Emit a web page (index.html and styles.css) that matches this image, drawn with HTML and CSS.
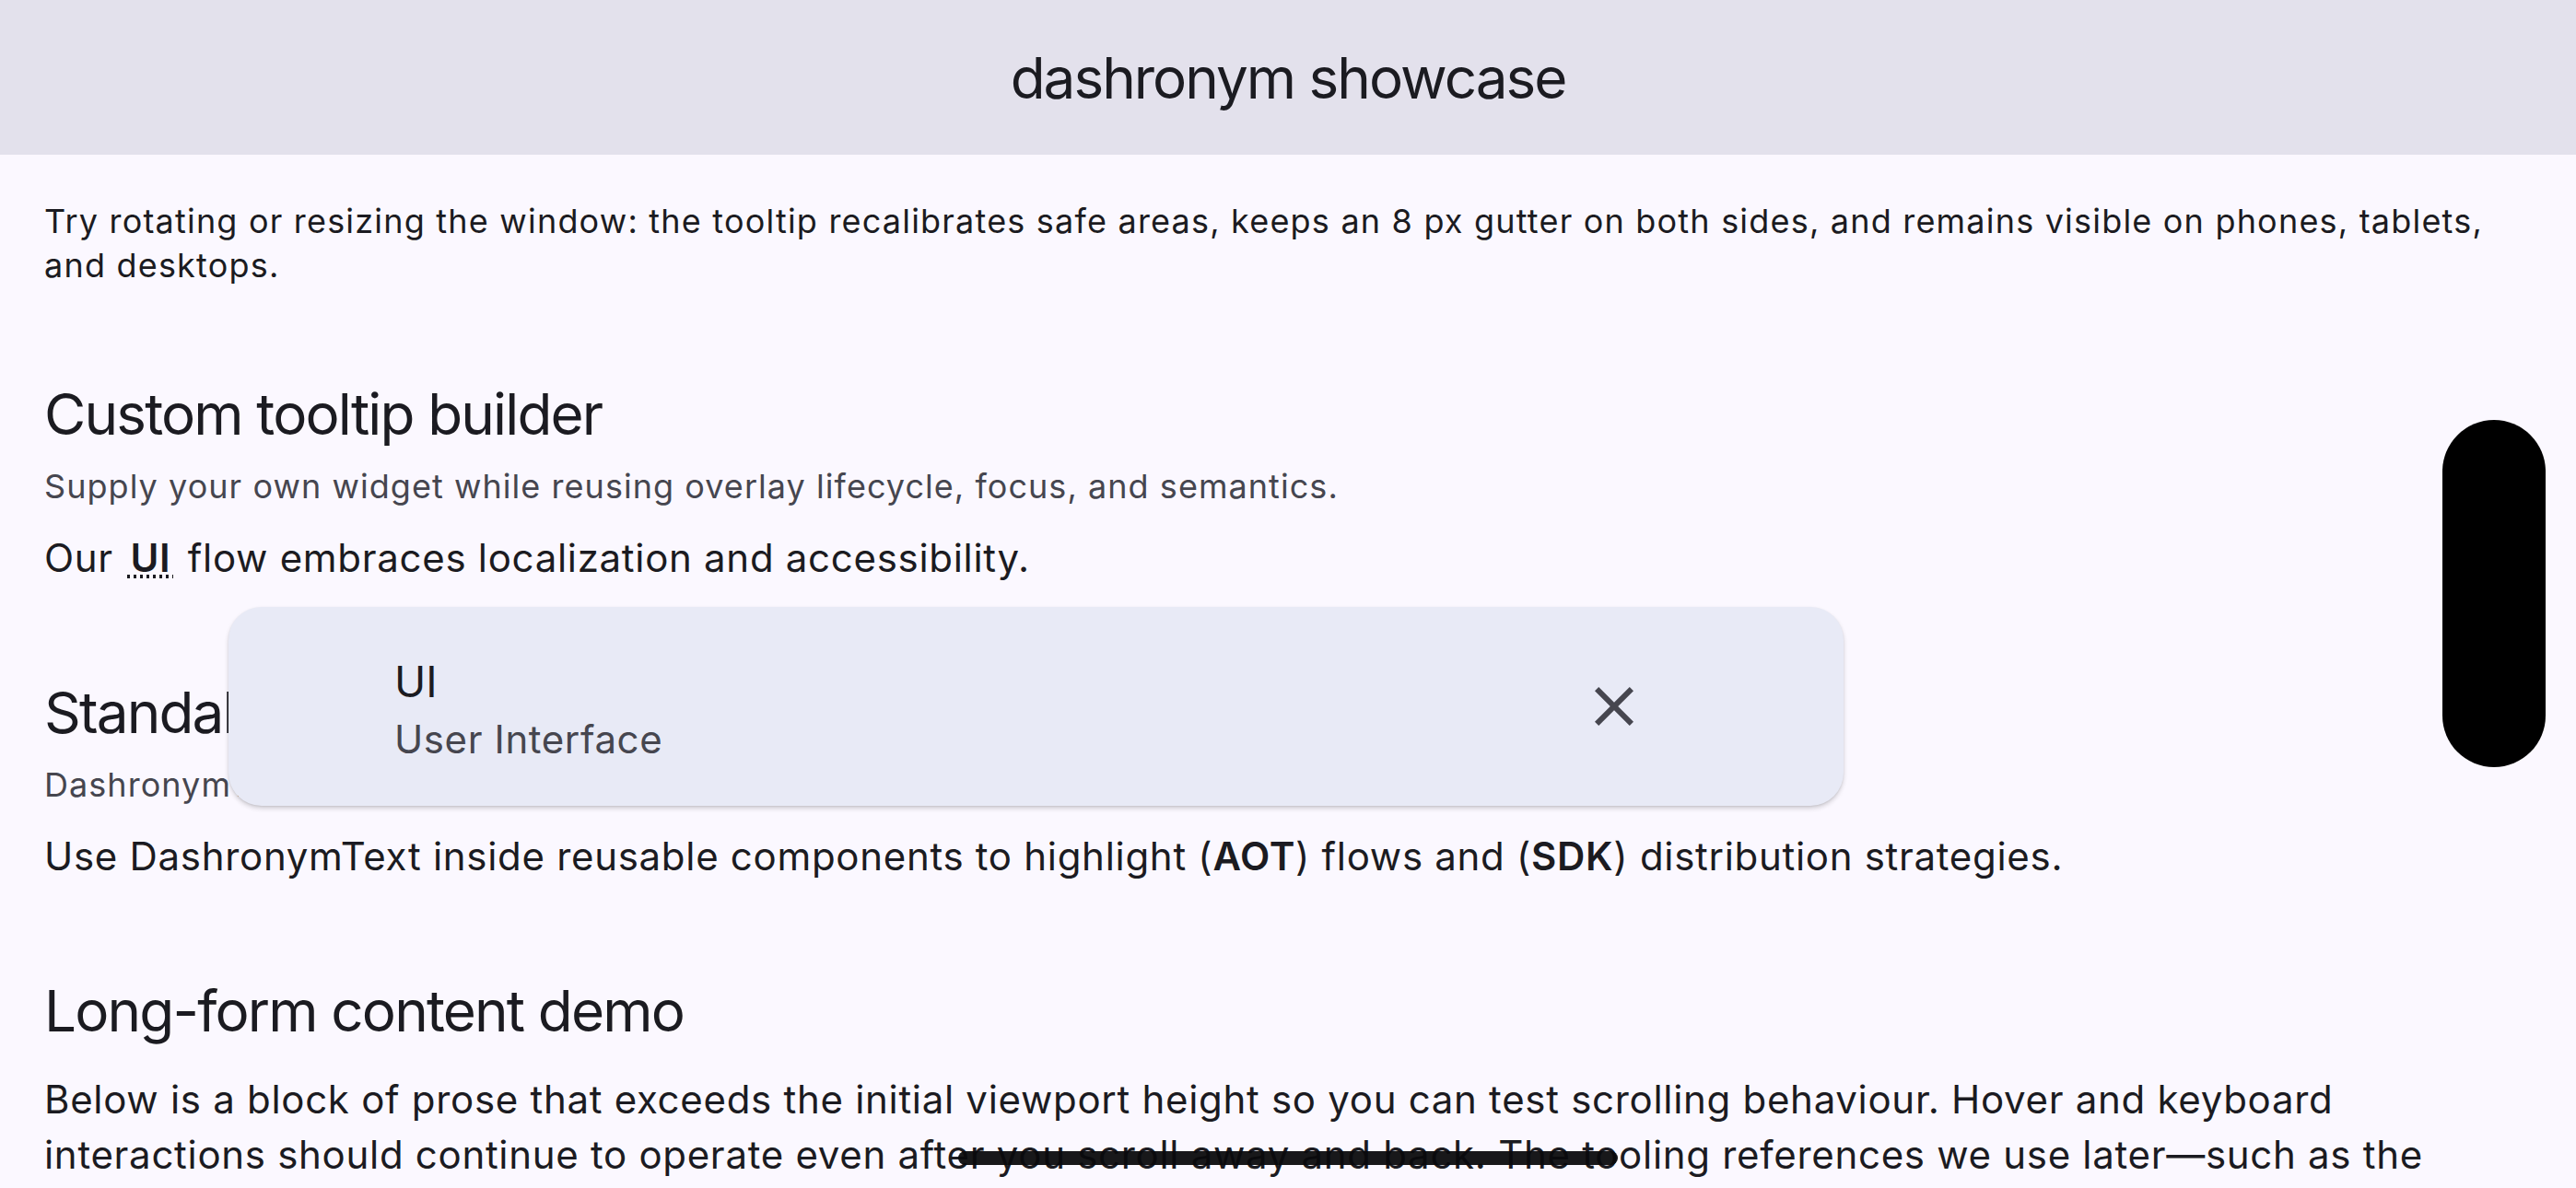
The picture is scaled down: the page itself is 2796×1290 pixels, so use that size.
FILE: index.html
```html
<!DOCTYPE html>
<html lang="en">
<head>
<meta charset="utf-8">
<title>dashronym showcase</title>
<link rel="stylesheet" href="styles.css">
</head>
<body>
<div class="app">
  <header class="appbar">
    <h1 class="appbar-title">dashronym showcase</h1>
  </header>
  <main class="content">
    <p class="intro">Try rotating or resizing the window: the tooltip recalibrates safe areas, keeps an 8 px gutter on both sides, and remains visible on phones, tablets, and desktops.</p>

    <section class="section">
      <h2 class="heading">Custom tooltip builder</h2>
      <p class="sub">Supply your own widget while reusing overlay lifecycle, focus, and semantics.</p>
      <p class="body">Our <span class="acro">UI</span> flow embraces localization and accessibility.</p>
    </section>

    <section class="section">
      <h2 class="heading">Standalone widget</h2>
      <p class="sub">DashronymText drops into any widget tree without extra configuration.</p>
      <p class="body">Use DashronymText inside reusable components to highlight (<b class="strong">AOT</b>) flows and (<b class="strong">SDK</b>) distribution strategies.</p>
    </section>

    <section class="section">
      <h2 class="heading">Long-form content demo</h2>
      <p class="body long">Below is a block of prose that exceeds the initial viewport height so you can test scrolling behaviour. Hover and keyboard interactions should continue to operate even after you scroll away and back. The tooling references we use later—such as the continuous integration pipelines and the command line tools—remain discoverable through the same tooltip surface while the page keeps scrolling underneath.</p>
    </section>
  </main>

  <div class="tooltip" role="tooltip">
    <div class="tooltip-text">
      <div class="tooltip-term">UI</div>
      <div class="tooltip-def">User Interface</div>
    </div>
    <button class="tooltip-close" aria-label="Close">
      <svg viewBox="0 0 24 24" width="72" height="72"><path d="M19 6.41L17.59 5 12 10.59 6.41 5 5 6.41 10.59 12 5 17.59 6.41 19 12 13.41 17.59 19 19 17.59 13.41 12z" fill="#46464f"/></svg>
    </button>
  </div>

  <div class="scroll-thumb"></div>
  <div class="home-indicator"></div>
</div>
</body>
</html>
```
FILE: styles.css
```css
html, body {
  margin: 0;
  padding: 0;
  overflow: hidden;
}

body {
  font-family: Inter, Roboto, "Noto Sans", sans-serif;
  color: #1b1b21;
  background: #fbf8ff;
}

.app {
  position: relative;
  width: 2796px;
  height: 1290px;
  overflow: hidden;
  background: #fbf8ff;
}

.appbar {
  height: 168px;
  background: #e3e1ec;
  display: flex;
  align-items: center;
  justify-content: center;
}

.appbar-title {
  margin: 0;
  font-size: 62px;
  line-height: 84px;
  font-weight: 400;
  letter-spacing: -2px;
  color: #1b1b21;
  transform: translateY(1px);
}

.content {
  padding: 48px 48px 0;
  display: flex;
  flex-direction: column;
}

.intro {
  margin: 0;
  font-size: 36px;
  line-height: 48px;
  letter-spacing: 1.2px;
  color: #1b1b21;
}

.section {
  margin-top: 96px;
  display: flex;
  flex-direction: column;
}

.heading {
  margin: 0;
  font-size: 62px;
  line-height: 84px;
  font-weight: 400;
  letter-spacing: -1.85px;
  color: #1b1b21;
}

.sub {
  margin: 12px 0 0;
  font-size: 36px;
  line-height: 48px;
  letter-spacing: 1.05px;
  color: #46464f;
}

.body {
  margin: 24px 0 0;
  font-size: 42px;
  line-height: 60px;
  letter-spacing: 0.7px;
  color: #1b1b21;
}

.acro {
  font-weight: 600;
  padding: 0 3px;
  margin: 0 3px;
  background-image: repeating-linear-gradient(to right, #1b1b21 0 3px, transparent 3px 7px);
  background-size: 100% 4px;
  background-position: 0 calc(100% - 3px);
  background-repeat: no-repeat;
}

.strong {
  font-weight: 600;
}

.tooltip {
  position: absolute;
  left: 248px;
  top: 659px;
  width: 1753px;
  height: 216px;
  box-sizing: border-box;
  padding: 0 213px 0 180px;
  background: #e8eaf6;
  border-radius: 36px;
  box-shadow: 0 3px 5px rgba(0, 0, 0, 0.16), 0 1px 2px rgba(0, 0, 0, 0.08);
  display: flex;
  align-items: center;
}

.tooltip-text {
  flex: 1;
  align-self: flex-start;
  padding-top: 48px;
  display: flex;
  flex-direction: column;
}

.tooltip-term {
  font-size: 46px;
  line-height: 66px;
  color: #1b1b21;
}

.tooltip-def {
  font-size: 42px;
  line-height: 60px;
  letter-spacing: 0.6px;
  color: #46464f;
}

.tooltip-close {
  width: 72px;
  height: 72px;
  padding: 0;
  margin: 0;
  border: 0;
  background: transparent;
  display: flex;
}

.scroll-thumb {
  position: absolute;
  left: 2651px;
  top: 456px;
  width: 112px;
  height: 377px;
  border-radius: 56px;
  background: #000;
}

.home-indicator {
  position: absolute;
  left: 1040px;
  top: 1250px;
  width: 716px;
  height: 15px;
  border-radius: 8px;
  background: rgba(10, 10, 12, 0.94);
}
```
